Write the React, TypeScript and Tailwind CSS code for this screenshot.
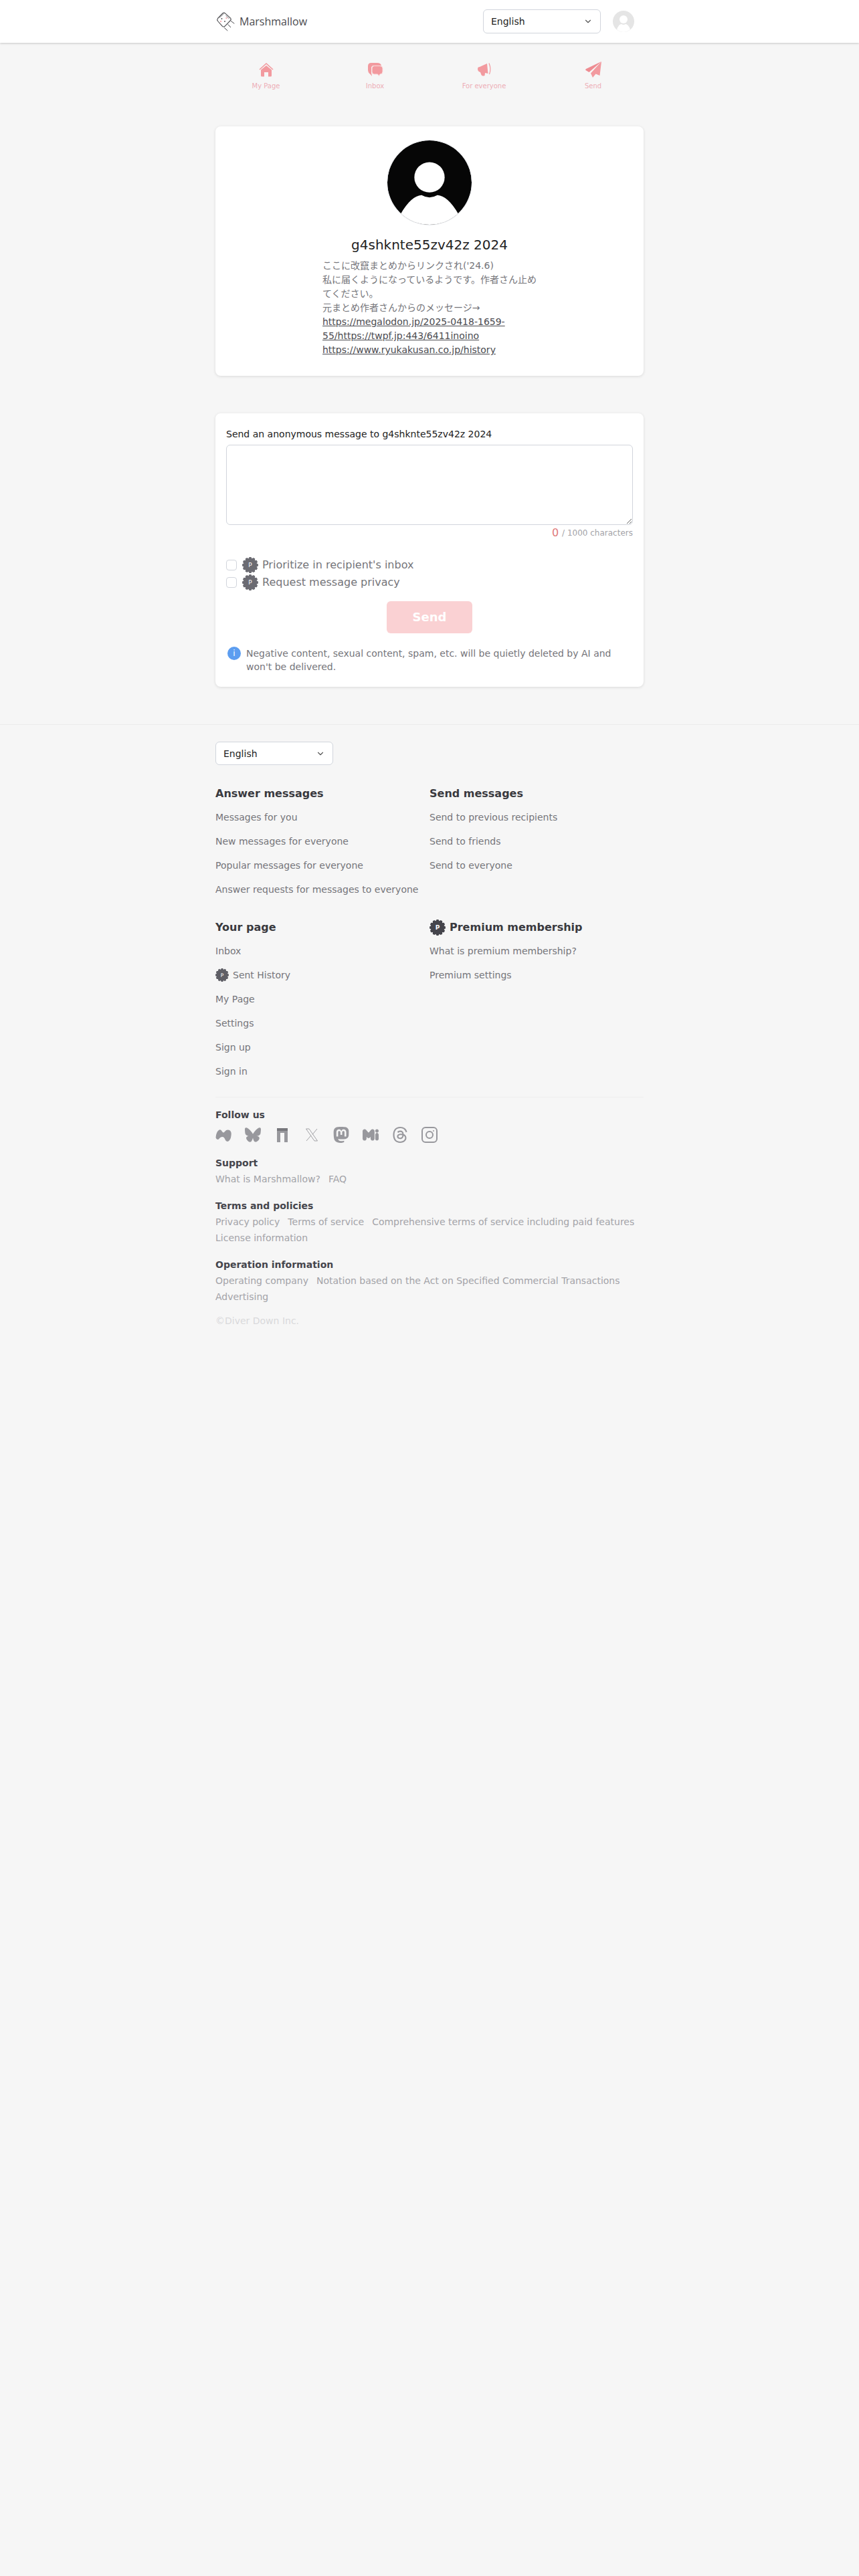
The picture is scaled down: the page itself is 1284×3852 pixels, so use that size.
import { ChevronDown } from 'lucide-react';
import { SiBluesky, SiMastodon, SiMisskey, SiThreads } from 'react-icons/si';

const gearPoints = (() => {
  const points: string[] = [];
  const teeth = 12;
  for (let i = 0; i < teeth; i++) {
    const step = (Math.PI * 2) / teeth;
    const corners = [
      [10, -0.5],
      [12, -0.22],
      [12, 0.22],
      [10, 0.5],
    ];
    corners.forEach(([radius, offset]) => {
      const angle = (i + offset) * step;
      points.push(`${(12 + radius * Math.sin(angle)).toFixed(2)},${(12 - radius * Math.cos(angle)).toFixed(2)}`);
    });
  }
  return points.join(' ');
})();

function PremiumBadge({ size = 24, color = '#6b6b72' }: { size?: number; color?: string }) {
  return (
    <svg width={size} height={size} viewBox="0 0 24 24" className="shrink-0">
      <polygon points={gearPoints} fill={color} />
      <text x="12" y="15" textAnchor="middle" fontSize="9" fill="#ffffff" fontFamily="DejaVu Sans">P</text>
    </svg>
  );
}

function Logo() {
  return (
    <svg width="30" height="30" viewBox="0 0 30 30" fill="none" className="shrink-0">
      <path d="M3.500 10.500 L11 2.800 Q13 1.500 14.500 2.800 L22.500 10 Q24 12 22.500 13.500 L14 22.300 Q12 23.800 10.500 22.300 L3.500 14.500 Q2 12.500 3.500 10.500 Z" stroke="#4b4b4f" strokeWidth="1.1" />
      <path d="M6 9.500 L12.500 3.500 M15.500 6 L20.500 11" stroke="#4b4b4f" strokeWidth="0.7" />
      <circle cx="9.500" cy="11" r="0.9" fill="#4b4b4f" />
      <circle cx="14" cy="15" r="0.9" fill="#4b4b4f" />
      <circle cx="8" cy="15" r="1.2" fill="#f6b3b8" />
      <circle cx="16.500" cy="10" r="1.2" fill="#f6b3b8" />
      <path d="M23.500 14.700 L28 18 M19 19.700 L22.700 23.700 M13.500 24.700 L18 28.700" stroke="#4b4b4f" strokeWidth="1" strokeLinecap="round" />
    </svg>
  );
}

function HomeIcon() {
  return (
    <svg width="24" height="28" viewBox="0 0 24 28">
      <path d="M2 14 L12 5 L22 14" fill="none" stroke="#f29a9f" strokeWidth="1.6" />
      <path d="M4 14.500 L12 8 L20 14.500 V23 Q20 24.500 18.500 24.500 H15 V18 H9 V24.500 H5.500 Q4 24.500 4 23 Z" fill="#f29a9f" />
    </svg>
  );
}

function InboxIcon() {
  return (
    <svg width="24" height="28" viewBox="0 0 24 28">
      <path d="M6 4 H15 Q20 4 21 8 H10 Q6 8 6 12 V19 L7 24 L4.500 21 Q1 19 1 14 V9 Q1 4 6 4 Z" fill="#f29a9f" />
      <path d="M10.500 8.500 H19 Q23 8.500 23 12.500 V17 Q23 21 19 21 L17.500 23.500 L15.500 21 H10.500 Q7 21 7 17.500 V12 Q7 8.500 10.500 8.500 Z" fill="#f29a9f" stroke="#fbdfe0" strokeWidth="1" />
    </svg>
  );
}

function MegaphoneIcon() {
  return (
    <svg width="24" height="28" viewBox="0 0 24 28">
      <path d="M2 13 Q2 10 5 10 L16 5 L17.500 20 L13 19 L12.500 23 Q9 24.500 7.500 22 L6 18 Q2 17 2 13 Z" fill="#f29a9f" />
      <path d="M19 4.500 Q22.500 13 19.500 21" fill="none" stroke="#f29a9f" strokeWidth="1.2" />
    </svg>
  );
}

function SendIcon() {
  return (
    <svg width="26" height="28" viewBox="0 0 26 28">
      <path d="M25 2 L22.500 23 L16.500 20.500 L12 26 L9 19.500 L25 2 Z" fill="#f29a9f" />
      <path d="M25 2 L6.500 18 L1.500 15 Q0.500 14 2 13 Z" fill="#ee8c92" />
    </svg>
  );
}

function Mixi2Icon() {
  return (
    <svg width="24" height="24" viewBox="0 0 24 24">
      <path d="M0.500 16 Q1 8 5 5 Q8 3 10 7 Q12 10 14 7 Q17 3.500 21 5 Q24.500 7 23.500 13 Q23 19 19.500 21.500 Q16 23 14.500 19 Q13 15 10.500 15 Q7 15 5 18.500 Q1.500 20 0.500 16 Z" fill="#98989d" />
    </svg>
  );
}

function PawooIcon() {
  return (
    <svg width="24" height="24" viewBox="0 0 24 24">
      <rect x="4" y="2" width="16" height="4" fill="#77777c" />
      <path d="M4 6 H20 V23 H15 V9 H9 V23 H4 Z" fill="#98989d" />
    </svg>
  );
}

function XIcon() {
  return (
    <svg width="24" height="24" viewBox="0 0 24 24" fill="none" stroke="#98989d" strokeWidth="0.9">
      <path d="M3.500 3 H8 L20.500 21 H16 Z M20 3 L13 11.500 M4 21 L11 12.800" />
    </svg>
  );
}

function InstagramIcon() {
  return (
    <svg width="24" height="24" viewBox="0 0 24 24" fill="none" stroke="#98989d" strokeWidth="2">
      <rect x="1" y="1" width="22" height="22" rx="5" />
      <circle cx="12" cy="12" r="5" />
      <circle cx="18" cy="6" r="1" fill="#98989d" stroke="none" />
    </svg>
  );
}

function Avatar() {
  return (
    <svg width="128" height="128" viewBox="0 0 128 128" className="rounded-full border border-gray-200">
      <circle cx="64" cy="64" r="64" fill="#060606" />
      <ellipse cx="64" cy="56" rx="23" ry="23" fill="#ffffff" />
      <path d="M20 112 Q36 84 52 83 Q64 90 76 83 Q92 84 108 112 Q90 128 64 128 Q38 128 20 112 Z" fill="#ffffff" />
    </svg>
  );
}

function SmallAvatar() {
  return (
    <svg width="32" height="32" viewBox="0 0 32 32" className="shrink-0">
      <circle cx="16" cy="16" r="16" fill="#e5e5e5" />
      <circle cx="16" cy="13" r="6" fill="#ffffff" />
      <path d="M6 28 Q9 20 13 20 Q16 22 19 20 Q23 20 26 28 Q21 32 16 32 Q11 32 6 28 Z" fill="#ffffff" />
    </svg>
  );
}

function LanguageSelect({ height }: { height: string }) {
  return (
    <div className="relative w-[176px]">
      <select className={`${height} w-full appearance-none rounded-md border border-gray-300 bg-white px-[11px] text-sm text-[#222222]`}>
        <option>English</option>
      </select>
      <ChevronDown size={14} className="absolute right-[12px] top-1/2 -translate-y-1/2 text-[#555555] pointer-events-none" />
    </div>
  );
}

const navItems = [
  { label: 'My Page', icon: <HomeIcon /> },
  { label: 'Inbox', icon: <InboxIcon /> },
  { label: 'For everyone', icon: <MegaphoneIcon /> },
  { label: 'Send', icon: <SendIcon /> },
];

function FooterColumn({ title, badge, items }: { title: string; badge?: boolean; items: { label: string; badge?: boolean }[] }) {
  return (
    <div>
      <h3 className="flex items-center gap-[6px] h-6 text-base font-bold text-[#3a3a3f]">
        {badge && <PremiumBadge color="#45454c" />}
        {title}
      </h3>
      <ul className="mt-[5px]">
        {items.map((item) => (
          <li key={item.label} className="flex items-center gap-[6px] h-9 text-sm text-[#75757a]">
            {item.badge && <PremiumBadge size={20} color="#5f5f66" />}
            {item.label}
          </li>
        ))}
      </ul>
    </div>
  );
}

function LinkGroup({ title, links }: { title: string; links: string[] }) {
  return (
    <div className="mt-4">
      <h4 className="text-sm leading-6 font-bold text-[#45454c]">{title}</h4>
      <div className="flex flex-wrap gap-x-3 text-sm leading-6 text-[#a3a3a8]">
        {links.map((link) => (
          <span key={link}>{link}</span>
        ))}
      </div>
    </div>
  );
}

export default function App() {
  return (
    <div className="min-h-[3852px] bg-[#f6f6f6] font-['DejaVu_Sans','Noto_Sans_CJK_JP',sans-serif]">
      {/* Header */}
      <header className="h-16 bg-white shadow-[0_1px_3px_rgba(0,0,0,0.2)]">
        <div className="mx-auto flex h-full w-[640px] items-center justify-between">
          <div className="flex items-center gap-[6px]">
            <Logo />
            <span className="font-['Open_Sans',sans-serif] text-base text-[#4b4b4f]">Marshmallow</span>
          </div>
          <div className="flex items-center gap-[18px] pr-[14px]">
            <LanguageSelect height="h-9" />
            <SmallAvatar />
          </div>
        </div>
      </header>

      {/* Nav */}
      <nav className="mx-auto grid w-[652px] grid-cols-4 pt-[26px]">
        {navItems.map((item) => (
          <div key={item.label} className="flex flex-col items-center">
            <div className="flex h-7 items-center justify-center">{item.icon}</div>
            <span className="mt-[3px] text-[10px] leading-[15px] text-[#edaeb7]">{item.label}</span>
          </div>
        ))}
      </nav>

      <main className="mx-auto mt-[53px] w-[640px]">
        {/* Profile */}
        <section className="flex flex-col items-center rounded-lg bg-white pt-5 pb-7 shadow-[0_1px_4px_rgba(0,0,0,0.12)]">
          <Avatar />
          <h1 className="mt-[14px] text-xl leading-[30px] text-[#222222]">g4shknte55zv42z 2024</h1>
          <div className="mt-[6px] w-[320px] text-sm leading-[21px] text-[#75757a]">
            <p>ここに改竄まとめからリンクされ('24.6)</p>
            <p>私に届くようになっているようです。作者さん止めてください。</p>
            <p>元まとめ作者さんからのメッセージ→</p>
            <a className="block w-[280px] text-[#4b4b50] underline">https://megalodon.jp/2025-0418-1659-<br />55/https://twpf.jp:443/6411inoino</a>
            <a className="block text-[#4b4b50] underline">https://www.ryukakusan.co.jp/history</a>
          </div>
        </section>

        {/* Message form */}
        <section className="mt-14 rounded-lg bg-white px-4 pt-[21px] pb-5 shadow-[0_1px_4px_rgba(0,0,0,0.12)]">
          <label className="block text-sm leading-[21px] text-[#222222]">Send an anonymous message to g4shknte55zv42z 2024</label>
          <textarea className="mt-[5px] block h-[120px] w-full rounded-md border border-gray-300" />
          <div className="flex h-6 items-center justify-end gap-[5px] text-xs text-[#a3a3a8]">
            <span className="text-base text-[#e07a7a]">0</span>
            <span>/ 1000 characters</span>
          </div>
          <div className="mt-[23px]">
            <label className="flex h-[26px] items-center gap-2 text-base text-[#75757a]">
              <input type="checkbox" className="h-4 w-4 appearance-none rounded border border-gray-300" />
              <PremiumBadge />
              <span className="-ml-[2px]">Prioritize in recipient's inbox</span>
            </label>
            <label className="flex h-[26px] items-center gap-2 text-base text-[#75757a]">
              <input type="checkbox" className="h-4 w-4 appearance-none rounded border border-gray-300" />
              <PremiumBadge />
              <span className="-ml-[2px]">Request message privacy</span>
            </label>
          </div>
          <button className="mx-auto mt-[15px] block h-12 w-32 rounded-md bg-[#fad1d3] text-lg font-bold text-white">Send</button>
          <div className="mt-5 flex gap-2 text-sm leading-5 text-[#75757a]">
            <div className="ml-[2px] flex h-5 w-5 shrink-0 items-center justify-center rounded-full bg-[#5c9df0] text-xs text-white">i</div>
            <p>Negative content, sexual content, spam, etc. will be quietly deleted by AI and won't be delivered.</p>
          </div>
        </section>
      </main>

      {/* Footer */}
      <footer className="mt-14 border-t border-[#ececec] pt-[25px]">
        <div className="mx-auto w-[640px]">
          <LanguageSelect height="h-[35px]" />
          <div className="mt-[31px] grid grid-cols-2 gap-y-[27px]">
            <FooterColumn
              title="Answer messages"
              items={[
                { label: 'Messages for you' },
                { label: 'New messages for everyone' },
                { label: 'Popular messages for everyone' },
                { label: 'Answer requests for messages to everyone' },
              ]}
            />
            <FooterColumn
              title="Send messages"
              items={[{ label: 'Send to previous recipients' }, { label: 'Send to friends' }, { label: 'Send to everyone' }]}
            />
            <FooterColumn
              title="Your page"
              items={[
                { label: 'Inbox' },
                { label: 'Sent History', badge: true },
                { label: 'My Page' },
                { label: 'Settings' },
                { label: 'Sign up' },
                { label: 'Sign in' },
              ]}
            />
            <FooterColumn title="Premium membership" badge items={[{ label: 'What is premium membership?' }, { label: 'Premium settings' }]} />
          </div>
          <div className="mt-5 border-t border-[#eeeeee] pt-[14px]">
            <h4 className="text-sm leading-6 font-bold text-[#45454c]">Follow us</h4>
            <div className="mt-[6px] flex items-center gap-5 pb-[2px] text-[#98989d]">
              <Mixi2Icon />
              <SiBluesky size={24} />
              <PawooIcon />
              <XIcon />
              <SiMastodon size={24} />
              <SiMisskey size={24} />
              <SiThreads size={24} />
              <InstagramIcon />
            </div>
            <LinkGroup title="Support" links={['What is Marshmallow?', 'FAQ']} />
            <LinkGroup
              title="Terms and policies"
              links={['Privacy policy', 'Terms of service', 'Comprehensive terms of service including paid features', 'License information']}
            />
            <LinkGroup
              title="Operation information"
              links={['Operating company', 'Notation based on the Act on Specified Commercial Transactions', 'Advertising']}
            />
            <p className="mt-3 text-sm leading-6 text-[#d9d9db]">©Diver Down Inc.</p>
          </div>
        </div>
      </footer>
    </div>
  );
}
